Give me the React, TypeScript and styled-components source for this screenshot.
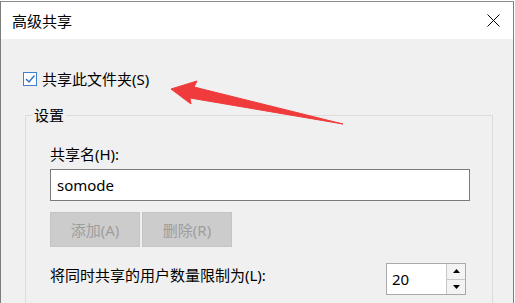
import styled, { createGlobalStyle } from "styled-components";

const Global = createGlobalStyle`
  html, body {
    margin: 0;
    padding: 0;
    background: #ffffff;
    overflow: hidden;
  }
  body {
    font-family: "Noto Sans", "Noto Sans CJK SC", sans-serif;
    color: #1a1a1a;
  }
`;

const Window = styled.div`
  position: relative;
  width: 512px;
  height: 302px;
  margin-top: 1px;
  border-top: 1px solid #8c8c8c;
  border-left: 1px solid #7d7d7d;
  border-right: 1px solid #7d7d7d;
  display: flex;
  flex-direction: column;
  overflow: hidden;
`;

const TitleBar = styled.div`
  height: 37px;
  flex: none;
  background: #ffffff;
  display: flex;
  align-items: center;
  justify-content: space-between;
  padding: 0 13px 0 11px;
  font-size: 15px;
  color: #000;
`;

const Close = styled.div`
  width: 14px;
  height: 14px;
  display: flex;
  align-items: center;
  justify-content: center;
`;

const Body = styled.div`
  flex: 1;
  background: #f0f0f0;
  padding: 30px 0 0 22px;
`;

const CheckRow = styled.label`
  display: flex;
  align-items: center;
  height: 20px;
  font-size: 15px;
  line-height: 20px;
  color: #000;
`;

const Box = styled.span`
  width: 12px;
  height: 12px;
  border: 1px solid #3f7fcf;
  background: #fff;
  display: flex;
  align-items: center;
  justify-content: center;
  margin-right: 5px;
`;

const Group = styled.fieldset`
  margin: 16px 0 0 2px;
  width: 468px;
  box-sizing: border-box;
  border: 1px solid #dcdcdc;
  padding: 19px 22px 40px 24px;
`;

const Legend = styled.legend`
  margin-left: -18px;
  padding: 0 2px;
  font-size: 15px;
  line-height: 20px;
  color: #000;
`;

const Label = styled.div<{ $top?: number }>`
  font-size: 15px;
  line-height: 20px;
  color: #000;
  margin-top: ${(p) => p.$top ?? 0}px;
`;

const TextInput = styled.div`
  margin-top: 5px;
  height: 32px;
  box-sizing: border-box;
  border: 1px solid #7a7a7a;
  background: #fff;
  padding-left: 6px;
  display: flex;
  align-items: center;
  font-size: 15px;
  color: #000;
`;

const Buttons = styled.div`
  display: flex;
  gap: 2px;
  margin-top: 11px;
`;

const Button = styled.div`
  width: 90px;
  height: 35px;
  box-sizing: border-box;
  background: #cccccc;
  border: 1px solid #c4c4c4;
  color: #9d9d9d;
  font-size: 15px;
  display: flex;
  align-items: center;
  justify-content: center;
`;

const LimitRow = styled.div`
  display: flex;
  justify-content: space-between;
  align-items: flex-start;
  margin-top: 16px;
  padding-right: 4px;
`;

const Spinner = styled.div`
  width: 80px;
  height: 32px;
  box-sizing: border-box;
  border: 1px solid #a9a9a9;
  background: #fff;
  display: flex;
`;

const SpinValue = styled.div`
  flex: 1;
  display: flex;
  align-items: center;
  padding-left: 5px;
  font-size: 15px;
  color: #000;
`;

const SpinButtons = styled.div`
  width: 18px;
  display: flex;
  flex-direction: column;
  border-left: 1px solid #c8c8c8;
`;

const SpinBtn = styled.div<{ $down?: boolean }>`
  flex: 1;
  background: #f3f3f3;
  border-top: ${(p) => (p.$down ? "1px solid #c8c8c8" : "none")};
  display: flex;
  align-items: center;
  justify-content: center;
`;

const Arrow = styled.svg`
  position: absolute;
  left: 0;
  top: 0;
  pointer-events: none;
`;

export default function App() {
  return (
    <>
      <Global />
      <Window>
        <TitleBar>
          <span>高级共享</span>
          <Close>
            <svg width="13" height="13" viewBox="0 0 13 13">
              <path d="M0.5 0.5 L12.5 12.5 M12.5 0.5 L0.5 12.5" stroke="#000" strokeWidth="1" />
            </svg>
          </Close>
        </TitleBar>
        <Body>
          <CheckRow>
            <Box>
              <svg width="10" height="10" viewBox="0 0 10 10">
                <path d="M1 5 L4 8 L9.5 1.5" fill="none" stroke="#2f6fc9" strokeWidth="1.4" />
              </svg>
            </Box>
            共享此文件夹(S)
          </CheckRow>
          <Group>
            <Legend>设置</Legend>
            <Label>共享名(H):</Label>
            <TextInput>somode</TextInput>
            <Buttons>
              <Button>添加(A)</Button>
              <Button>删除(R)</Button>
            </Buttons>
            <LimitRow>
              <Label $top={2}>将同时共享的用户数量限制为(L):</Label>
              <Spinner>
                <SpinValue>20</SpinValue>
                <SpinButtons>
                  <SpinBtn>
                    <svg width="7" height="4" viewBox="0 0 7 4">
                      <path d="M0 4 L3.5 0 L7 4 Z" fill="#000" />
                    </svg>
                  </SpinBtn>
                  <SpinBtn $down>
                    <svg width="7" height="4" viewBox="0 0 7 4">
                      <path d="M0 0 L3.5 4 L7 0 Z" fill="#000" />
                    </svg>
                  </SpinBtn>
                </SpinButtons>
              </Spinner>
            </LimitRow>
          </Group>
        </Body>
        <Arrow width="515" height="303" viewBox="0 0 515 303">
          <path
            d="M170 87 L196 79 L193 85 L342 122 L189 96 L190 102 Z"
            fill="#ef3b3b"
            stroke="#ef3b3b"
            strokeWidth="1"
            strokeLinejoin="round"
          />
        </Arrow>
      </Window>
    </>
  );
}
